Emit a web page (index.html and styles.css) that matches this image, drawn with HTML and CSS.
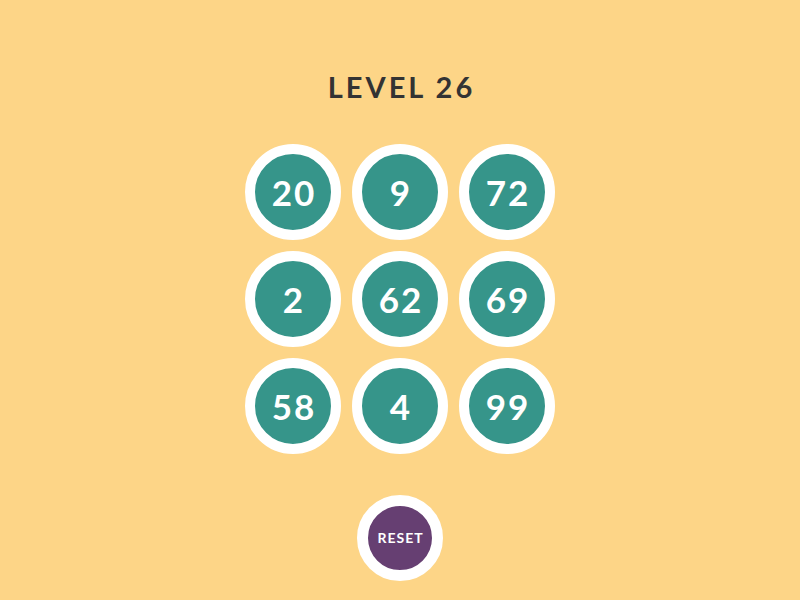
FILE: index.html
```
<!DOCTYPE html>
<html lang="en">
<head>
    <meta charset="UTF-8">
    <meta name="viewport" content="width=device-width, initial-scale=1.0">
    <title>Level 26</title>
    <link rel="stylesheet" href="styles.css">
</head>
<body>
    <div class="game">
        <h1 class="level-title">LEVEL 26</h1>

        <div class="board">
            <button class="tile">20</button>
            <button class="tile">9</button>
            <button class="tile">72</button>
            <button class="tile">2</button>
            <button class="tile">62</button>
            <button class="tile">69</button>
            <button class="tile">58</button>
            <button class="tile">4</button>
            <button class="tile">99</button>
        </div>

        <button class="reset-btn">RESET</button>
    </div>
</body>
</html>
```

FILE: styles.css
```
* {
    margin: 0;
    padding: 0;
    box-sizing: border-box;
    font-family: 'Lato', 'Noto Sans', sans-serif;
}

body {
    background: #fdd587;
    color: #333;
    height: 600px;
    overflow: hidden;
}

.game {
    display: flex;
    flex-direction: column;
    align-items: center;
    padding-top: 67px;
}

.level-title {
    font-size: 29px;
    line-height: 40px;
    font-weight: 700;
    letter-spacing: 3px;
    padding-left: 3px;
    color: #333;
}

.board {
    display: grid;
    grid-template-columns: repeat(3, 96px);
    gap: 11px;
    margin-top: 37px;
}

.tile {
    width: 96px;
    height: 96px;
    border-radius: 50%;
    border: 10px solid #fff;
    background: #36958a;
    color: #fff;
    font-size: 35px;
    font-weight: 700;
    letter-spacing: 2px;
    padding-left: 2px;
    cursor: pointer;
    display: flex;
    align-items: center;
    justify-content: center;
}

.reset-btn {
    margin-top: 41px;
    width: 86px;
    height: 86px;
    border-radius: 50%;
    border: 11px solid #fff;
    background: #663f72;
    color: #fff;
    font-size: 14px;
    font-weight: 700;
    letter-spacing: 1px;
    padding-left: 1px;
    padding-bottom: 2px;
    cursor: pointer;
}
```
